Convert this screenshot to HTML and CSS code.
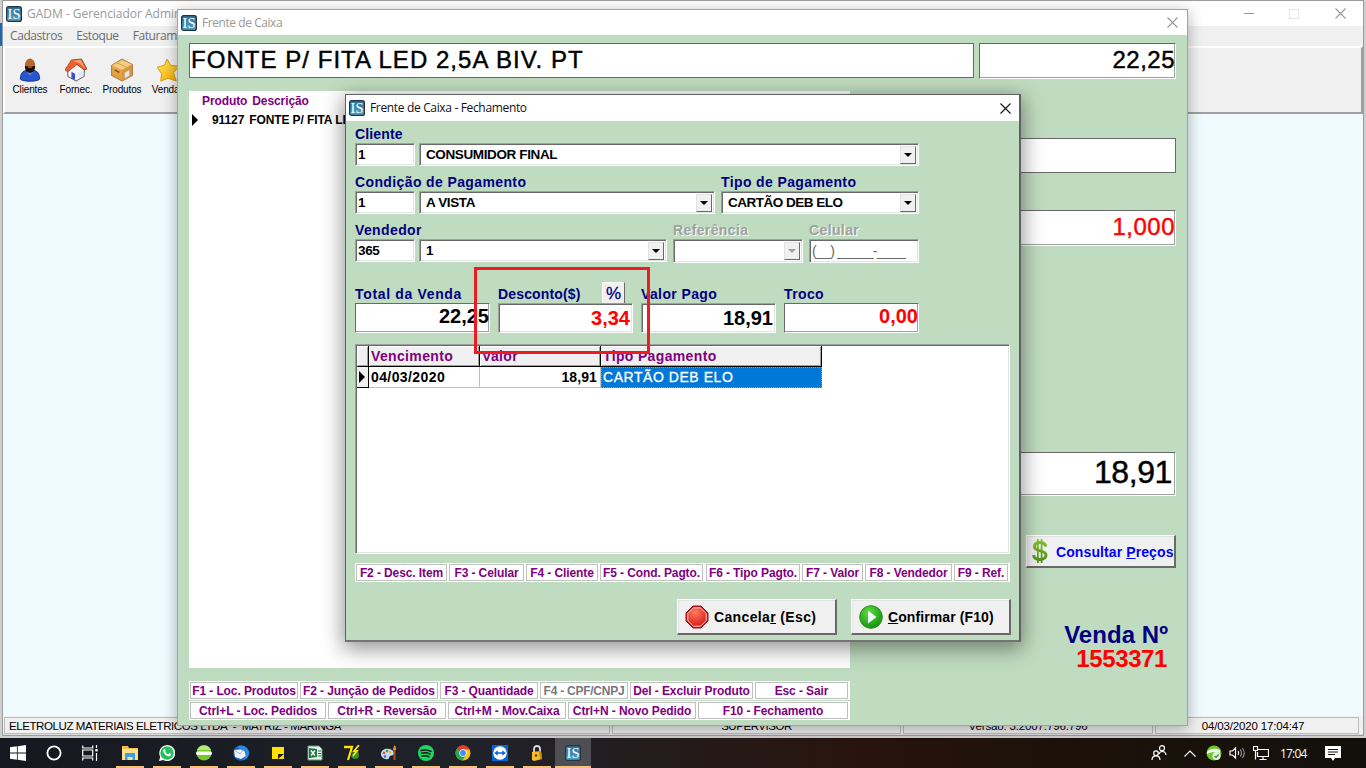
FILE: index.html
```html
<!DOCTYPE html>
<html lang="pt-BR">
<head>
<meta charset="utf-8">
<title>GADM - Gerenciador Administrativo</title>
<link rel="stylesheet" href="styles.css">
</head>
<body>
<svg width="0" height="0" class="defs">
  <defs>
    <linearGradient id="gBlue" x1="0" y1="0" x2="0" y2="1"><stop offset="0" stop-color="#2f6f99"/><stop offset="1" stop-color="#4fa3c4"/></linearGradient>
    <linearGradient id="gGreen" gradientUnits="userSpaceOnUse" x1="0" y1="0" x2="0" y2="26"><stop offset="0" stop-color="#8ac926"/><stop offset="1" stop-color="#4a8a1c"/></linearGradient>
    <linearGradient id="gStar" x1="0" y1="0" x2="1" y2="1"><stop offset="0" stop-color="#ffe860"/><stop offset="1" stop-color="#f5a800"/></linearGradient>
    <radialGradient id="gPlay" cx=".4" cy=".3" r=".8"><stop offset="0" stop-color="#5be03a"/><stop offset="1" stop-color="#0f8a0c"/></radialGradient>
    <radialGradient id="gStop" cx=".4" cy=".25" r=".8"><stop offset="0" stop-color="#ff7a62"/><stop offset="1" stop-color="#d81a10"/></radialGradient>
    <symbol id="is" viewBox="0 0 16 16"><rect x=".6" y=".6" width="14.8" height="14.8" rx="2" fill="url(#gBlue)" stroke="#24343f" stroke-width="1.2"/><text x="8" y="12.8" text-anchor="middle" class="is-text">IS</text></symbol>
    <symbol id="close" viewBox="0 0 11 11"><path d="M.5.5l10 10M10.5.5l-10 10" fill="none" stroke="currentColor" stroke-width="1.1"/></symbol>
  </defs>
</svg>
<div class="desktop">
  <div class="edge-blue"></div>
  <section class="main-win">
    <header class="titlebar">
      <svg class="app-icon"><use href="#is"/></svg>
      <span class="title">GADM - Gerenciador Administrativo - Versão: 3.2007.796.796</span>
      <div class="win-buttons"><i class="min"></i><i class="max"></i><svg class="x"><use href="#close"/></svg></div>
    </header>
    <nav class="menu"><span>Cadastros</span><span>Estoque</span><span>Faturamento</span></nav>
    <div class="toolbar">
      <div class="tool"><svg viewBox="0 0 24 26"><path d="M1.500 23c0-8 4-10 10.500-10s10.500 2 10.500 10c-3 3-18 3-21 0z" fill="#2855d0" stroke="#16308a"/><path d="M8 15l4 4 4-4z" fill="#5d87ee"/><ellipse cx="12" cy="7.500" rx="5.500" ry="7" fill="#b8692a"/><path d="M6.500 8c1 1.500 10 1.500 11 0 .5 5-2 8-5.500 8s-6-3-5.500-8z" fill="#1c100a"/><ellipse cx="12" cy="9.800" rx="2.500" ry="1" fill="#9c5827"/></svg>Clientes</div>
      <div class="tool"><svg viewBox="0 0 24 26"><path d="M3 12l9-6 9 6v8l-9 5-9-5z" fill="#f4f4fa" stroke="#555"/><path d="M0 13L7 2l11-1 6 11-3 1-8-6-10 8z" fill="#f0622a" stroke="#7a3a22" stroke-width=".8"/><path d="M8 3l9-1 5 9-7-6z" fill="#ffa26e"/><path d="M7 15l4 2v7l-4-2z" fill="#3a50c0"/><path d="M14 16l5-2v5l-5 2z" fill="#dfe6f6"/></svg>Fornec.</div>
      <div class="tool"><svg viewBox="0 0 24 26"><path d="M.5 8L12 1l11.500 6v12L12 25 .5 19z" fill="#e2a144" stroke="#8b6230" stroke-width=".8"/><path d="M1 8l11-6 11 5-11 6z" fill="#f6cd80"/><path d="M12 13l11-6v12l-11 6z" fill="#d9953c"/><path d="M15 16l5-3v6l-5 3z" fill="#dbe7f8"/><path d="M4 13l5 2.500" stroke="#7a4b16" stroke-width="1.500"/><path d="M6 5l11 5" stroke="#d59b48"/></svg>Produtos</div>
      <div class="tool"><svg viewBox="0 0 24 26"><path d="M11 1l4 7 9 1-6 7 3 9-9-3-8 3 1-8-5-7 8-2z" fill="url(#gStar)" stroke="#d89200"/></svg>Vendas</div>
    </div>
    <div class="workspace"></div>
    <footer class="statusbar"><span class="st-a">ELETROLUZ MATERIAIS ELETRICOS LTDA&nbsp; -&nbsp; MATRIZ - MARINGA</span><span class="st-b">SUPERVISOR</span><span class="st-c">Versão: 3.2007.796.796</span><span class="st-d">04/03/2020 17:04:47</span></footer>
  </section>

  <section class="pos-win">
    <header class="titlebar"><svg class="app-icon"><use href="#is"/></svg><span class="title">Frente de Caixa</span><svg class="x"><use href="#close"/></svg></header>
    <div class="pos-body">
      <div class="pos-top"><div class="flat item-name">FONTE P/ FITA LED 2,5A BIV. PT</div><div class="flat price">22,25</div></div>
      <div class="pos-mid">
        <div class="list">
          <div class="list-head"><span>Produto</span><span>Descrição</span></div>
          <div class="list-row"><i class="marker"></i><span>91127</span><span>FONTE P/ FITA LED 2,5A BIV. PT</span></div>
        </div>
        <aside class="side">
          <div class="flat blank"></div>
          <div class="flat qty">1,000</div>
          <div class="flat total">18,91</div>
          <div class="btn consult"><svg viewBox="0 0 18 26"><path d="M6.900 1v24M10.600 1v24" stroke="url(#gGreen)" stroke-width="1.700"/><path d="M15 8.500c-1-3-3.500-4-6-4-3.500 0-5.500 1.800-5.500 4.200 0 5.300 11.500 3 11.500 8.300 0 3-2.800 4.500-6 4.500-3.500 0-6-1.500-6.500-4.500" fill="none" stroke="url(#gGreen)" stroke-width="3"/></svg><span>Consultar <u>P</u>reços</span></div>
          <div class="sale-label">Venda Nº</div>
          <div class="sale-no">1553371</div>
        </aside>
      </div>
      <div class="keys pos-keys k1"><span>F1 - Loc. Produtos</span><span>F2 - Junção de Pedidos</span><span>F3 - Quantidade</span><span class="off">F4 - CPF/CNPJ</span><span>Del - Excluir Produto</span><span>Esc - Sair</span></div>
      <div class="keys pos-keys k2"><span>Ctrl+L - Loc. Pedidos</span><span>Ctrl+R - Reversão</span><span>Ctrl+M - Mov.Caixa</span><span>Ctrl+N - Novo Pedido</span><span>F10 - Fechamento</span></div>
    </div>
  </section>

  <section class="dialog">
    <header class="titlebar"><svg class="app-icon"><use href="#is"/></svg><span class="title">Frente de Caixa - Fechamento</span><svg class="x"><use href="#close"/></svg></header>
    <div class="dlg-body">
      <div class="row r1">
        <div class="field w60"><label class="snug">Cliente</label><div class="inp">1</div></div>
        <div class="field w500"><label></label><div class="inp combo">CONSUMIDOR FINAL<i class="drop"></i></div></div>
      </div>
      <div class="row r2">
        <div class="field w60"><label>Condição de Pagamento</label><div class="inp">1</div></div>
        <div class="field w296"><label></label><div class="inp combo">A VISTA<i class="drop"></i></div></div>
        <div class="field w198"><label>Tipo de Pagamento</label><div class="inp combo tight">CARTÃO DEB ELO<i class="drop"></i></div></div>
      </div>
      <div class="row r3">
        <div class="field w60"><label>Vendedor</label><div class="inp">365</div></div>
        <div class="field w248"><label></label><div class="inp combo">1<i class="drop"></i></div></div>
        <div class="field w130 off"><label>Referência</label><div class="inp combo"><i class="drop"></i></div></div>
        <div class="field w110 off"><label>Celular</label><div class="inp mask">(__) _____-____</div></div>
      </div>
      <div class="row r4">
        <div class="field amount"><label class="wide">Total da Venda</label><div class="inp ro">22,25</div></div>
        <div class="field amount"><div class="label-line"><label class="snug">Desconto($)</label><div class="pct">%</div></div><div class="inp red">3,34</div></div>
        <div class="field amount"><label>Valor Pago</label><div class="inp">18,91</div></div>
        <div class="field amount"><label>Troco</label><div class="inp ro red">0,00</div></div>
      </div>
      <div class="table">
        <div class="tr th"><span></span><span>Vencimento</span><span>Valor</span><span>Tipo Pagamento</span></div>
        <div class="tr td"><span><i class="marker"></i></span><span>04/03/2020</span><span>18,91</span><span>CARTÃO DEB ELO</span></div>
      </div>
      <div class="keys dlg-keys"><span>F2 - Desc. Item</span><span>F3 - Celular</span><span>F4 - Cliente</span><span>F5 - Cond. Pagto.</span><span>F6 - Tipo Pagto.</span><span>F7 - Valor</span><span>F8 - Vendedor</span><span>F9 - Ref.</span></div>
      <div class="actions">
        <div class="btn"><svg viewBox="0 0 24 24"><path d="M8 1h8l7 7v8l-7 7H8l-7-7V8z" fill="#c01818" stroke="#a01010"/><path d="M8.500 2.800h7l5.700 5.700v7l-5.700 5.700h-7l-5.700-5.700v-7z" fill="url(#gStop)" stroke="#f4d6d2" stroke-width="1"/></svg><span>Cancela<u>r</u> (Esc)</span></div>
        <div class="btn ok"><svg viewBox="0 0 24 24"><circle cx="12" cy="12" r="11.300" fill="url(#gPlay)" stroke="#2a8a20"/><path d="M9 5.500v13l8.500-6.500z" fill="#f2f7ff"/></svg><span><u>C</u>onfirmar (F10)</span></div>
      </div>
    </div>
  </section>
  <div class="highlight"></div>

  <footer class="taskbar">
    <div class="tb sys"><svg viewBox="0 0 16 16"><path d="M0 2.300l6.900-1v6.300H0zM7.700 1.200L16 0v7.600H7.700zM0 8.400h6.900v6.300l-6.900-1zM7.700 8.400H16V16l-8.300-1.200z" fill="#fff"/></svg></div>
    <div class="tb sys"><svg viewBox="0 0 16 16"><circle cx="8" cy="8" r="6.600" fill="none" stroke="#fff" stroke-width="1.800"/></svg></div>
    <div class="tb sys"><svg viewBox="0 0 16 16"><path d="M.7.500v2.500h10V.500M.7 15.500v-2.500h10v2.500M.7 5h10v6H.7zM14.500 0v3M14.500 8v8" fill="none" stroke="#fff" stroke-width="1.200"/><path d="M13.300 4h2.400v2.400h-2.400z" fill="#fff"/></svg></div>
    <div class="tb on first"><svg viewBox="0 0 16 16"><path d="M0 1h6l1 2h9v12H0z" fill="#f3c04f"/><path d="M0 4h16v11H0z" fill="#fde08b"/><path d="M3 8h10v7h-2.500v-3h-5v3H3z" fill="#37a0e6"/></svg></div>
    <div class="tb on"><svg viewBox="0 0 16 16"><path d="M0 16l1.200-4.200A8 8 0 1 1 4.300 15z" fill="#fff"/><circle cx="8" cy="8" r="6.700" fill="#22c15c"/><path d="M4.300 5c.6-1.500 1.500-1.300 2-.2.700 1.500-.5 1.500 0 2.200.8 1.300 1.500 1.900 2.700 2.300.8.100.8-1.500 1.800-1 2 .8 1.300 1.700.6 2.400C8.500 13 3.500 8 4.300 5z" fill="#fff"/></svg></div>
    <div class="tb on"><svg viewBox="0 0 16 16"><circle cx="8" cy="8" r="7.500" fill="#76c82c"/><path d="M1 5a7.500 7.500 0 0 1 14 0z" fill="#b5e878"/><rect y="6.500" width="16" height="3.600" rx="1.800" fill="#f6fff0"/></svg></div>
    <div class="tb on"><svg viewBox="0 0 16 16"><circle cx="8" cy="8" r="7.800" fill="#1765c0"/><path d="M1 5l10-1 2 7-5 3-6-2z" fill="#f0f3f8"/><path d="M1 5l6 4 4-5" fill="none" stroke="#a7b7ce"/><path d="M4 2c5-3 12 0 12 6 0 4-3 7-6 7 4-3 4-9-1-10z" fill="#2b8ae6"/></svg></div>
    <div class="tb on"><svg viewBox="0 0 16 16"><path d="M2 2h12v12H2z" fill="#ffe100"/><path d="M8 14V9h6z" fill="#222"/></svg></div>
    <div class="tb on"><svg viewBox="0 0 16 16"><path d="M1 1h11l3 3v11H1z" fill="#e8f4ec" stroke="#5b9c76"/><path d="M2 3l8 1v8l-8 1z" fill="#217346"/><path d="M4 5.500l4 5M8 5.500l-4 5" stroke="#fff" stroke-width="1.400"/><path d="M11 6h3M11 8.500h3M11 11h3" stroke="#217346"/></svg></div>
    <div class="tb on"><svg viewBox="0 0 16 16"><circle cx="11" cy="10" r="4" fill="#3c8b3c"/><path d="M0 2h8L4 15" fill="none" stroke="#111" stroke-width="4"/><path d="M0 2h8L4 15" fill="none" stroke="#ffe400" stroke-width="2.300"/><path d="M15 0l-5 6h3l-4 5" fill="none" stroke="#ffe400" stroke-width="1.800"/></svg></div>
    <div class="tb on"><svg viewBox="0 0 16 16"><path d="M8 4c-5-1-8 2-8 5s3 6 7 5c2-.5.5-2 2-3s4 0 4-3c0-2-2-3.500-5-4z" fill="#c6dcec"/><circle cx="3" cy="8" r="1.300" fill="#e04a32"/><circle cx="6" cy="6" r="1.300" fill="#36a44c"/><circle cx="4" cy="11.500" r="1.300" fill="#2c70d0"/><circle cx="9" cy="7" r="1.200" fill="#f1b51c"/><path d="M13.500 5v10" stroke="#9a5420" stroke-width="2"/><path d="M12 5c0-2 1-3 1.500-5C15 2 15.500 4 15 5z" fill="#f08c28"/></svg></div>
    <div class="tb on"><svg viewBox="0 0 16 16"><circle cx="8" cy="8" r="8" fill="#1ed760"/><path d="M3 5.500c3.500-1 7-.7 10 1M3.500 8.300c3-.8 6-.5 8.500.9M4 11c2.500-.6 5-.4 7 .8" fill="none" stroke="#151515" stroke-width="1.500" stroke-linecap="round"/></svg></div>
    <div class="tb on"><svg viewBox="0 0 16 16"><circle cx="8" cy="8" r="7.500" fill="#fbc116"/><path d="M8 8L1.500 4.300A7.500 7.500 0 0 1 14.700 4.600H8z" fill="#e33b2e"/><path d="M8 8L1.500 4.300A7.500 7.500 0 0 0 7.500 15.500L11 10z" fill="#23a455"/><circle cx="8" cy="8" r="3.700" fill="#fff"/><circle cx="8" cy="8" r="2.900" fill="#4688f1"/></svg></div>
    <div class="tb on"><svg viewBox="0 0 16 16"><path d="M0 0h16v16H0z" fill="#0a66d8"/><circle cx="8" cy="8" r="6.800" fill="#fff"/><path d="M2.200 8l3.500-2.800v2h4.600v-2L13.800 8l-3.500 2.800v-2H5.700v2z" fill="#0a66d8"/></svg></div>
    <div class="tb on"><svg viewBox="0 0 16 16"><path d="M5 8V4c0-4 6-4 6 0v3" fill="none" stroke="#d7dbdd" stroke-width="1.800"/><path d="M3 7l9-1 1 8-8 2-2-1z" fill="#f4bd25"/><path d="M10 6.200l2-.2 1 8-2 .5z" fill="#c98a10"/><circle cx="7" cy="10.500" r="1.200" fill="#5a3c05"/></svg></div>
    <div class="tb on active"><svg><use href="#is"/></svg></div>
    <div class="tray">
      <svg class="people" viewBox="0 0 16 16"><circle cx="5" cy="8.200" r="2.300"/><path d="M1 15c0-5.500 8-5.500 8 0"/><circle cx="11" cy="3.200" r="2.500"/><path d="M8 9c1-3.500 6.500-3.500 7 1"/></svg>
      <svg class="caret" viewBox="0 0 12 7"><path d="M.5 6.500L6 1l5.500 5.500"/></svg>
      <svg class="shield" viewBox="0 0 16 16"><circle cx="8" cy="8" r="7.500" fill="#70c62e"/><path d="M1 7c3-4 9-4 13-2v3c-5-2-9-1-13 1z" fill="#f0ffe8"/><circle cx="10.500" cy="11" r="4" fill="#eee"/><path d="M8.500 11l1.500 1.500 2.700-3" fill="none" stroke="#3b912a" stroke-width="1.300"/></svg>
      <svg class="vol" viewBox="0 0 16 14"><path d="M1 5h2.500L6.500 2v10L3.500 9H1zM9 5q1.500 2 0 4"/><path d="M11 3.500q3 3.500 0 7M13.300 2q4 5 0 10" opacity=".5"/></svg>
      <svg class="net" viewBox="0 0 16 14"><path d="M5 3.500h10.500v7H4.500V6M10 10.500v3M6.500 13.500h7M.5.500h4v4h-4zM2.500 4.500v9"/></svg>
      <span class="clock">17:04</span>
      <svg class="note" viewBox="0 0 16 15"><path d="M0 0h16v12H10l-2 3-2-3H0z" fill="#fff"/><path d="M3 3.500h10M3 6h10M3 8.500h7" stroke="#18120c"/></svg>
    </div>
  </footer>
</div>
</body>
</html>
```
FILE: styles.css
```css
* { box-sizing: border-box; }
body { margin: 0; overflow: hidden; font-family: "Liberation Sans", Arial, sans-serif; color: #000; }
.defs { position: absolute; }
.desktop { position: relative; width: 1366px; height: 768px; overflow: hidden; background: #cfcfcf; }
.edge-blue { position: absolute; left: 0; top: 23px; width: 3px; height: 23px; background: #1769b8; }
svg { display: block; flex: none; }
.is-text { font: 14.5px "Liberation Serif", serif; fill: #fff; }

/* windows */
.main-win, .pos-win, .dialog { position: absolute; display: flex; flex-direction: column; }
.main-win { left: 2px; top: 0; width: 1362px; height: 736px; border: 1px solid #9c9c9c; background: #f0f0f0; }
.pos-win { left: 177px; top: 9px; width: 1011px; height: 717px; border: 1px solid #a0a4a0; background: #c0dcc0; box-shadow: 0 3px 14px rgba(0,0,0,.32); }
.dialog { left: 345px; top: 94px; width: 676px; height: 548px; border: 1px solid #606060; border-right-width: 2px; border-bottom: 2px solid #747474; background: #c0dcc0; box-shadow: 0 5px 20px 2px rgba(0,0,0,.42); }
.titlebar { display: flex; align-items: center; height: 25px; flex: none; background: #fff; color: #999; font: 12px "Open Sans", "Noto Sans", sans-serif; }
.app-icon { width: 16px; height: 16px; margin: 0 5px 0 3px; }
.title { flex: 1; letter-spacing: -.34px; white-space: nowrap; margin-top: -1px; }
.x { width: 11px; height: 11px; }
.main-win .title { letter-spacing: -.02px; }
.pos-win .title { letter-spacing: -.44px; }
.win-buttons { display: flex; align-items: center; margin-right: 17px; }
.min { width: 10px; height: 1px; background: #999; margin-right: 35px; }
.max { width: 10px; height: 10px; border: 1px solid #e6e6e6; margin-right: 36px; }
.menu { display: flex; gap: 14px; height: 20px; padding: 0 0 0 7px; color: #6d6d6d; font: 12px/19px "Open Sans", "Noto Sans", sans-serif; flex: none; letter-spacing: -.42px; }
.toolbar { display: flex; height: 68px; flex: none; border: 2px solid #fff; border-right-color: #a0a0a0; border-bottom-color: #a0a0a0; padding-top: 9px; }
.tool { width: 46px; display: flex; flex-direction: column; align-items: center; font-size: 10px; line-height: 12px; letter-spacing: -.15px; }
.tool:first-child { margin-left: 2px; }
.tool svg { width: 22px; height: 26px; margin-bottom: 1px; }
.workspace { flex: 1; background: #f0fbff; }
.statusbar { height: 19px; flex: none; display: flex; gap: 2px; padding: 1px 4px 1px 1px; background: #f0f0f0; border-bottom: 1px solid #ddd; }
.statusbar span { border: 1px solid #bdbdbd; height: 17px; font-size: 11.500px; line-height: 17px; text-align: center; white-space: nowrap; overflow: hidden; letter-spacing: -.15px; }
.statusbar .st-a { width: 606px; text-align: left; padding-left: 4px; letter-spacing: -.41px; }
.statusbar .st-b { width: 289px; letter-spacing: -.45px; }
.st-c { width: 250px; }
.st-d { flex: 1; padding-right: 8px; }

/* point of sale */
.pos-win .x { margin-right: 9px; }
.pos-body { padding: 8px 11px 0; }
.flat { background: #fff; border: 1px solid #696969; text-align: right; -webkit-text-stroke: .45px currentColor; white-space: nowrap; }
.pos-top { display: flex; gap: 5px; font-size: 24px; line-height: 32px; }
.item-name { width: 785px; height: 35px; text-align: left; padding-left: 1px; letter-spacing: 1.04px; }
.price, .qty { width: 197px; height: 36px; border-right-color: #fff; border-bottom-color: #fff; letter-spacing: .5px; box-shadow: inset -1px -1px #a0a0a0; }
.pos-mid { display: flex; gap: 9px; margin-top: 12px; height: 577px; }
.list { width: 661px; background: #fff; font-size: 12px; font-weight: bold; line-height: 19px; }
.list-head { display: flex; gap: 5px; padding: 1px 0 0 13px; color: #800080; letter-spacing: -.1px; }
.list-row { display: flex; align-items: center; white-space: nowrap; overflow: hidden; letter-spacing: -.1px; }
.list-row span { margin-right: 5px; }
.marker { width: 0; height: 0; border: 5px solid transparent; border-left-color: #000; border-right: 0; flex: none; }
.list-row .marker { margin: -2px 14px 0 3px; border-width: 6px 0 6px 6px; }
.side { width: 317px; padding-top: 47px; display: flex; flex-direction: column; }
.blank { height: 35px; }
.qty { width: auto; margin-top: 37px; color: #f00; font-size: 24px; line-height: 32px; }
.side .flat { flex: none; }
.total { height: 44px; margin-top: 206px; font-size: 32px; line-height: 38px; padding-right: 3px; letter-spacing: -.4px; border-right-color: #fff; border-bottom-color: #fff; box-shadow: inset -1px -1px #a0a0a0; }
.btn { display: flex; align-items: center; background: #f0f0f0; border: 1px solid #fff; border-right: 2px solid #696969; border-bottom: 2px solid #696969; font-size: 14px; font-weight: bold; white-space: nowrap; box-shadow: inset 1px 1px #e3e3e3; letter-spacing: .36px; flex: none; }
.ok { letter-spacing: .1px; }
.consult { width: 150px; height: 33px; margin: 39px 0 0 167px; color: #00f; padding-left: 4px; }
.consult svg { width: 18px; height: 26px; margin-right: 7px; }
.consult span { letter-spacing: .1px; padding-top: 2px; }
.sale-label, .sale-no { font-size: 24px; font-weight: bold; line-height: 24px; text-align: right; padding-right: 8px; flex: none; }
.sale-label { margin-top: 55px; color: #000080; letter-spacing: .05px; }
.sale-no { color: #f00; letter-spacing: -.4px; padding-right: 9px; }
.keys { display: flex; gap: 2px; background: #fff; font-size: 12px; font-weight: bold; color: #800080; padding: 1px; white-space: nowrap; letter-spacing: -.1px; }
.keys span { border: 1px solid #c0c0c0; text-align: center; }
.pos-keys { width: 661px; height: 19px; line-height: 16px; }
.keys .off { color: #787878; letter-spacing: -.25px; }
.k1 { margin-top: 13px; }
.k2 { margin-top: 1px; }
.k1 span:nth-child(1) { width: 108px; }
.k1 span:nth-child(2) { width: 138px; }
.k1 span:nth-child(3) { width: 98px; }
.k1 span:nth-child(4) { width: 88px; }
.k1 span:nth-child(5) { width: 123px; }
.k1 span:nth-child(6) { width: 93px; }
.k2 span:nth-child(1) { width: 136px; }
.k2 span:nth-child(2) { width: 118px; }
.k2 span:nth-child(3) { width: 118px; }
.k2 span:nth-child(4) { width: 128px; }
.k2 span:nth-child(5) { width: 150px; }

/* closing dialog */
.dialog .titlebar { height: 26px; color: #111; }
.dialog .x { margin-right: 8px; }
.dlg-body { padding: 6px 0 0 9px; }
.row { display: flex; }
.r1, .r2 { height: 48px; gap: 4px; }
.r2 .w198 { margin-left: 2px; }
.r3 { height: 59px; gap: 6px; }
.r3 .w248 { margin-left: -2px; }
.r4 { height: 51px; gap: 8px; align-items: flex-end; }
.field { display: flex; flex-direction: column; flex: none; }
.w60 { width: 60px; }
.w500 { width: 500px; }
.w296 { width: 296px; }
.w198 { width: 198px; }
.w248 { width: 248px; }
.w130 { width: 130px; }
.w110 { width: 110px; }
.amount { width: 135px; }
label { display: block; height: 16px; color: #000080; font-size: 14px; line-height: 14px; font-weight: bold; letter-spacing: .38px; white-space: nowrap; }
label.snug { letter-spacing: .15px; }
label.wide { letter-spacing: .66px; }
.inp { position: relative; height: 23px; background: #fff; border: 1px solid #a0a0a0; border-right-color: #fff; border-bottom-color: #fff; box-shadow: inset 1px 1px #696969, inset -1px -1px #e3e3e3; padding: 0 2px; font-size: 14px; line-height: 21px; font-weight: bold; white-space: nowrap; }
.r1 .inp, .r2 .inp, .r3 .inp { font-size: 13.500px; letter-spacing: -.38px; }
.r2 .tight { letter-spacing: -.5px; }
.inp.combo { display: flex; justify-content: space-between; padding: 2px 2px 2px 6px; line-height: 17px; }
.drop { width: 16px; height: 18px; margin-left: auto; background: #f0f0f0; border: 1px solid #e3e3e3; border-right: 1px solid #696969; border-bottom: 1px solid #696969; display: grid; place-items: center; }
.drop::after { content: ""; border: 4px solid transparent; border-top-color: #000; border-bottom: 0; }
.off label { color: #a0a0a0; text-shadow: 1px 1px #fff; }
.off .drop::after { border-top-color: #a0a0a0; }
.off .inp { height: 24px; }
.r3 .mask { font-weight: normal; color: #666; font-size: 14px; line-height: 22px; letter-spacing: -.7px; }
.r4 .inp { height: 30px; font-size: 20px; line-height: 28px; text-align: right; }
.r4 .ro { line-height: 25px; padding-right: 0; border-top-color: #696969; border-left-color: #696969; box-shadow: inset -1px -1px #a0a0a0; }
.r4 .red { color: #f00; }
.label-line { display: flex; justify-content: space-between; align-items: flex-end; height: 21px; padding-right: 8px; }
.pct { width: 23px; height: 21px; background: #f0f0f0; border: 1px solid #fff; border-right: 1px solid #696969; border-bottom: 0; text-align: center; font-size: 17px; line-height: 22px; color: #000080; -webkit-text-stroke: .3px #000080; }
.table { margin-top: 11px; width: 655px; height: 210px; background: #fff; border: 1px solid #a0a0a0; border-right-color: #fff; border-bottom-color: #fff; box-shadow: inset 1px 1px #696969, inset -1px -1px #e3e3e3; padding: 1px; font-size: 14px; font-weight: bold; letter-spacing: .35px; }
.tr { display: grid; grid-template-columns: 12px 111px 121px 221px; }
.th { height: 21px; line-height: 20px; color: #800080; }
.th span { background: #f0f0f0; border-right: 1px solid #000; border-bottom: 1px solid #000; box-shadow: inset 1px 1px #fff, inset -1px -1px #a0a0a0; padding-left: 2px; }
.td { height: 21px; line-height: 20px; }
.td span { border-right: 1px solid #c0c0c0; border-bottom: 1px solid #c0c0c0; padding: 0 2px; letter-spacing: .4px; }
.td span:first-child { background: #f0f0f0; border-color: #000; display: flex; align-items: center; }
.td .marker { border-width: 6px 0 6px 6px; }
.td span:nth-child(3) { text-align: right; padding-right: 3px; letter-spacing: .1px; }
.td span:nth-child(4) { background: #0078d7; color: #fff; font-weight: normal; border: 1px dotted #e0883c; letter-spacing: .55px; line-height: 18px; padding-left: 1px; -webkit-text-stroke: .3px #fff; }
.dlg-keys { margin-top: 9px; width: 655px; height: 19px; line-height: 16px; }
.dlg-keys span:nth-child(1) { width: 91px; }
.dlg-keys span:nth-child(2) { width: 75px; }
.dlg-keys span:nth-child(3) { width: 72px; }
.dlg-keys span:nth-child(4) { width: 103px; margin-right: 1px; }
.dlg-keys span:nth-child(5) { width: 94px; }
.dlg-keys span:nth-child(6) { width: 61px; }
.dlg-keys span:nth-child(7) { width: 87px; }
.dlg-keys span:nth-child(8) { width: 54px; }
.actions { display: flex; gap: 14px; margin: 17px 0 0 322px; }
.actions .btn { width: 160px; height: 36px; padding-left: 7px; }
.actions svg { width: 24px; height: 24px; margin-right: 5px; }
.highlight { position: absolute; left: 474px; top: 267px; width: 176px; height: 87px; border: 3px solid #ed1c24; }

/* taskbar */
.taskbar { position: absolute; left: 0; top: 738px; width: 1366px; height: 30px; display: flex; background: linear-gradient(90deg, #15181e 0, #20222a 35%, #28140c 63%, #1e1209 75%, #12100c 100%); }
.tb { width: 37px; height: 30px; display: grid; place-items: center; flex: none; border-bottom: 2px solid transparent; }
.tb svg { width: 16px; height: 16px; margin-top: 1px; }
.tb.sys { width: 36px; }
.tb.first { margin-left: 3px; }
.tb.on { border: 0; background: linear-gradient(#f9c07c, #f9c07c) center bottom / 28px 2px no-repeat; padding-bottom: 1px; }
.tb.active { width: 36px; background-color: #4f4e52; background-size: 36px 2px; }
.tray { flex: 1; display: flex; align-items: center; justify-content: flex-end; padding-right: 25px; }
.tray svg { fill: none; stroke: #fff; stroke-width: 1.200; }
.tray .people { width: 16px; height: 16px; margin-right: 17px; }
.tray .caret { width: 12px; height: 7px; margin-right: 10px; }
.tray .shield { width: 16px; height: 16px; margin-right: 7px; stroke: none; }
.tray .vol { width: 16px; height: 14px; margin-right: 8px; }
.tray .net { width: 16px; height: 14px; margin-right: 11px; }
.tray .note { width: 16px; height: 15px; stroke: none; }
.clock { color: #fff; font: 12px "Open Sans", "Noto Sans", sans-serif; letter-spacing: -.8px; width: 27px; margin-right: 18px; white-space: nowrap; }
```
